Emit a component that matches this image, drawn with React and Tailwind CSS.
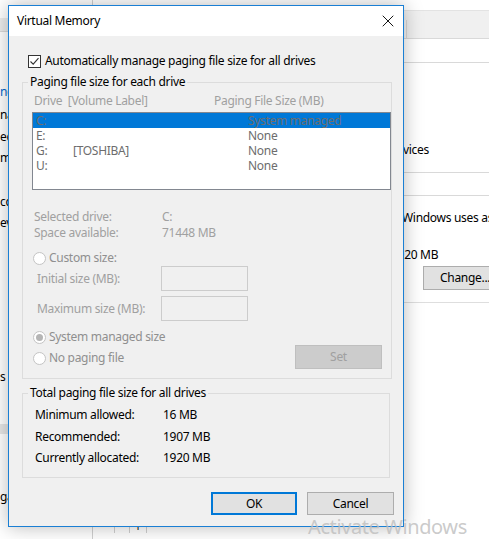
import { X } from "lucide-react"

// Radio circle used by the disabled radio rows
const Radio = ({ checked }) => (
  <span className="w-[13px] h-[13px] rounded-full border border-[#c4c4c4] bg-white flex items-center justify-center shrink-0">
    {checked && <span className="w-[7px] h-[7px] rounded-full bg-[#b5b5b5]" />}
  </span>
)

const drives = [
  { drive: "C:", label: "", size: "System managed", selected: true },
  { drive: "E:", label: "", size: "None" },
  { drive: "G:", label: "[TOSHIBA]", size: "None" },
  { drive: "U:", label: "", size: "None" },
]

const totals = [
  ["Minimum allowed:", "16 MB"],
  ["Recommended:", "1907 MB"],
  ["Currently allocated:", "1920 MB"],
]

const Background = () => (
  <div className="flex h-[539px] w-[489px]">
    {/* window behind on the left, only a sliver shows */}
    <div className="w-[92px] shrink-0 flex flex-col text-black whitespace-nowrap overflow-hidden">
      <div className="mt-[18px] h-[14px] bg-[#ececec] border-b border-[#dadada]" />
      <div className="mt-[52px] leading-[16px] text-[#0066cc]">network id</div>
      <div className="mt-[7px] leading-[16px]">name</div>
      <div className="mt-[6px] leading-[16px]">ecurity</div>
      <div className="mt-[5px] leading-[16px]">maximum</div>
      <div className="mt-[28px] leading-[16px]">ccount</div>
      <div className="mt-[5px] leading-[16px]">everything</div>
      <div className="mt-[138px] leading-[16px]">s</div>
      <div className="mt-[39px] h-[10px] bg-[#e6e6e6]" />
      <div className="mt-[55px] leading-[16px]">gain</div>
    </div>
    {/* Performance Options window */}
    <div className="flex-1 flex flex-col border-l border-[#d0d0d0] whitespace-nowrap overflow-hidden">
      <div className="h-[11px] border-b border-[#e3e3e3]" />
      <div className="h-[27px] bg-[#f0f0f0] flex">
        <div className="w-[314px] mt-[9px] border-r border-[#d9d9d9] bg-[#f5f5f5]" />
      </div>
      <div className="h-[24px] border-t border-[#d9d9d9]" />
      <div className="border-t border-[#d9d9d9]" />
      <div className="mt-[79px] flex leading-[16px]">
        <span className="w-[310px] shrink-0 text-right">Background ser</span>
        <span className="shrink-0">vices</span>
      </div>
      <div className="mt-[14px] h-[23px] border-t border-[#d9d9d9]" />
      <div className="border-t border-[#d9d9d9]" />
      <div className="mt-[14px] flex leading-[16px]">
        <span className="w-[309px] shrink-0 text-right pr-[4px]">is an area on the hard disk that</span>
        <span className="shrink-0">Windows uses as if it were RAM.</span>
      </div>
      <div className="mt-[21px] flex leading-[16px]">
        <span className="w-[298px] shrink-0">Total paging file size for all drives:</span>
        <span className="shrink-0">1920 MB</span>
      </div>
      <div className="mt-[3px] flex">
        <div className="ml-[330px] h-[24px] w-[80px] shrink-0 border border-[#adadad] bg-[#e1e1e1] flex items-center pl-[16px]">
          Change...
        </div>
      </div>
      <div className="mt-[12px] border-t border-[#dedede]" />
      <div className="mt-[216px] flex h-[14px]">
        <div className="w-[22px] border-r border-[#d0d0d0]" />
        <div className="ml-[14px] w-[18px] border-x border-[#d0d0d0] flex justify-center text-[10px] leading-[14px]">ı</div>
      </div>
    </div>
  </div>
)

const VirtualMemoryDialog = () => (
  <div className="absolute left-[8px] top-[5px] w-[396px] h-[522px] border border-[#1a7fd4] bg-[#f0f0f0] flex flex-col shadow-[0_0_18px_rgba(0,0,0,0.28)]">
    {/* title bar */}
    <div className="h-[30px] bg-white flex items-center justify-between">
      <span className="pl-[8px] text-black">Virtual Memory</span>
      <span className="w-[30px] h-[30px] flex items-center justify-center">
        <X size={20} strokeWidth={1.1} className="text-black" />
      </span>
    </div>

    <div className="px-[13px] flex flex-col">
      <label className="mt-[17px] ml-[6px] h-[16px] flex items-center gap-[4px] text-black">
        <span className="w-[13px] h-[13px] border border-[#333333] bg-white flex items-center justify-center">
          <svg width="11" height="11" viewBox="0 0 11 11">
            <path d="M1.5 5.5 L4.2 8.2 L9.5 2.2" fill="none" stroke="#333333" strokeWidth="1.1" />
          </svg>
        </span>
        Automatically manage paging file size for all drives
      </label>

      <fieldset className="mt-[5px] w-[368px] h-[305px] border border-[#dcdcdc]">
        <legend className="ml-[5px] px-[2px] leading-[16px] text-black">Paging file size for each drive</legend>
        <div className="pl-[9px] flex flex-col">
          <div className="mt-[3px] h-[16px] flex items-center text-[#a0a0a0]">
            <span className="ml-[2px] w-[180px]">Drive&nbsp; [Volume Label]</span>
            <span>Paging File Size (MB)</span>
          </div>

          <div className="mt-[3px] w-[359px] h-[78px] border border-[#828790] bg-white">
            {drives.map((d) => (
              <div
                key={d.drive}
                className={`h-[15px] leading-[15px] flex pl-[3px] text-[#6d6d6d] ${d.selected ? "bg-[#0078d7]" : ""}`}
              >
                <span className="w-[37px]">{d.drive}</span>
                <span className="w-[175px]">{d.label}</span>
                <span>{d.size}</span>
              </div>
            ))}
          </div>

          <div className="mt-[19px] text-[#a0a0a0] leading-[16px]">
            <div className="flex">
              <span className="ml-[2px] w-[128px]">Selected drive:</span>
              <span>C:</span>
            </div>
            <div className="flex">
              <span className="ml-[2px] w-[128px]">Space available:</span>
              <span>71448 MB</span>
            </div>
          </div>

          <div className="mt-[9px] h-[16px] ml-[1px] flex items-center gap-[3px] text-[#8f8f8f]">
            <Radio />
            Custom size:
          </div>
          <div className="flex items-center text-[#a0a0a0]">
            <span className="ml-[5px] w-[124px]">Initial size (MB):</span>
            <span className="w-[87px] h-[25px] border border-[#cccccc]" />
          </div>
          <div className="mt-[5px] flex items-center text-[#a0a0a0]">
            <span className="ml-[5px] w-[124px]">Maximum size (MB):</span>
            <span className="w-[87px] h-[25px] border border-[#cccccc]" />
          </div>

          <div className="mt-[8px] flex justify-between pr-[9px]">
            <div className="flex flex-col gap-[5px] text-[#8f8f8f]">
              <div className="h-[16px] ml-[1px] flex items-center gap-[3px]">
                <Radio checked />
                System managed size
              </div>
              <div className="h-[16px] ml-[1px] flex items-center gap-[3px]">
                <Radio />
                No paging file
              </div>
            </div>
            <div className="mt-[16px] w-[87px] h-[24px] border border-[#bfbfbf] bg-[#cccccc] flex items-center justify-center text-[#a0a0a0]">
              Set
            </div>
          </div>
        </div>
      </fieldset>

      <fieldset className="mt-[6px] w-[368px] h-[93px] border border-[#dcdcdc]">
        <legend className="ml-[5px] px-[2px] leading-[16px] text-black">Total paging file size for all drives</legend>
        <div className="pl-[12px] mt-[6px] flex flex-col gap-[5.5px] text-black">
          {totals.map(([k, v]) => (
            <div key={k} className="flex leading-[16px]">
              <span className="w-[128px]">{k}</span>
              <span>{v}</span>
            </div>
          ))}
        </div>
      </fieldset>
    </div>

    <div className="mt-[14px] pr-[9px] flex justify-end gap-[10px] text-black">
      <div className="w-[86px] h-[23px] border-2 border-[#0078d7] bg-[#e1e1e1] flex items-center justify-center">OK</div>
      <div className="w-[87px] h-[23px] border border-[#adadad] bg-[#e1e1e1] flex items-center justify-center">Cancel</div>
    </div>
  </div>
)

export default function App() {
  return (
    <div className="relative w-[489px] h-[539px] overflow-hidden bg-white text-[12px] tracking-[-0.3px] font-['Segoe_UI','Noto_Sans',sans-serif]">
      <Background />
      <VirtualMemoryDialog />
      <div className="absolute left-[308px] top-[515px] text-[20px] leading-[24px] tracking-[-0.4px] text-[#bdbdbd]/80 whitespace-nowrap pointer-events-none">
        Activate Windows
      </div>
    </div>
  )
}
